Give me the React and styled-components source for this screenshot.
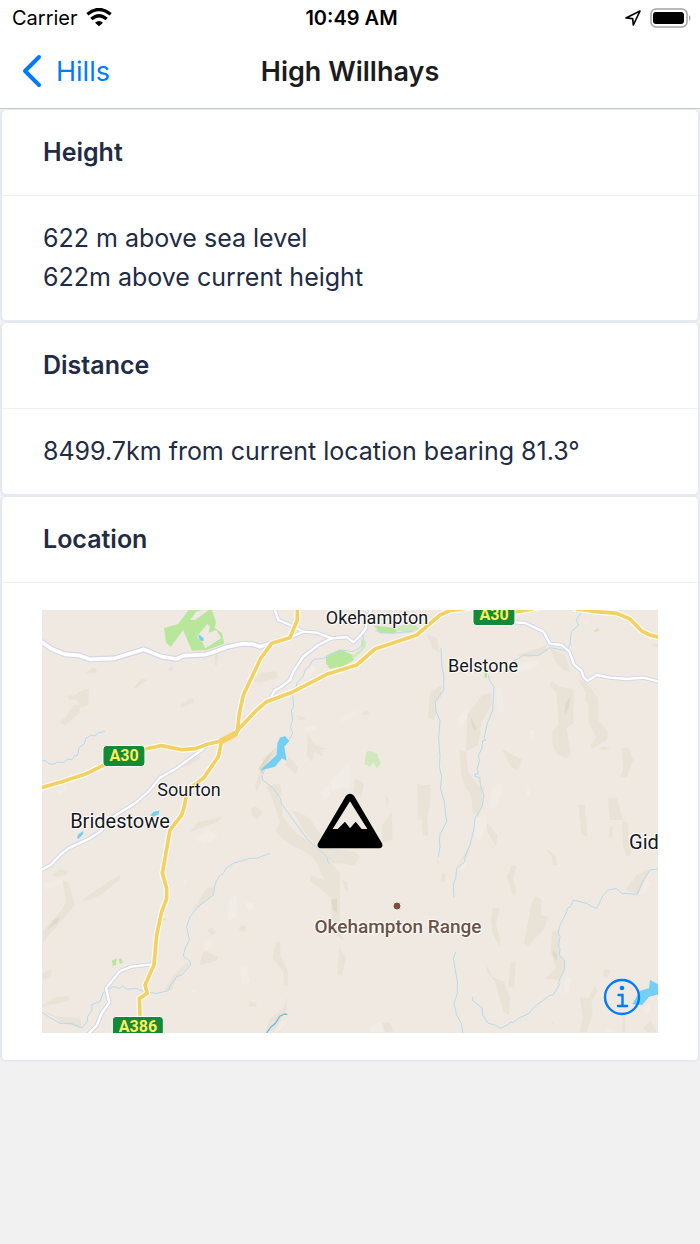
import React from "react";
import styled, { createGlobalStyle } from "styled-components";

const roads = {
  minor: [
    "M697 -5L709 30L744 45L784 65L824 68L869 85L914 81L934 97L952 80L972 55L974 25L990 -5",
    "M744 83L784 65",
    "M869 85L829 105L784 140L754 185L744 210L719 230L699 240L689 258",
    "M484 417L444 445L404 475L354 503L319 545L279 580L214 620L174 665L144 685L79 715L54 735L26 765L0 778",
    "M330 1063L269 1070L234 1083L192 1135L202 1177L179 1210L164 1247L139 1272",
    "M1419 37L1449 39L1504 65L1524 101L1559 105L1582 125L1596 163L1619 183L1624 200L1636 213L1664 195L1704 203L1754 207L1804 203L1852 215",
  ],
  wide: "M0 97L29 117L69 133L109 136L144 148L219 145L306 118L359 140L404 147L424 137L489 134L524 123L554 111L604 101L634 103L654 110L689 100",
  major: [
    "M-5 534L54 517L129 493L182 467L250 436L309 417L359 407L419 419L461 416L494 403L539 393L579 372L594 353L644 300L674 275L754 245L854 193L944 165L999 117L1124 75L1194 15L1224 2L1290 -8",
    "M1400 8L1440 3L1500 -10",
    "M1600 -4L1664 5L1724 10L1764 27L1799 63L1824 75L1852 82",
    "M766 -5L766 30L744 83L689 100L656 145L604 255L592 310L586 365",
    "M539 393L529 440L484 505L449 530L431 565L427 590L419 615L384 660L361 790L374 835L374 865L359 905L344 975L336 1065L309 1125L316 1150L292 1165L294 1215",
  ],
};

const rivers = [
  "M0 453L12 452L20 461L34 463L46 456L64 458L78 447L90 449L98 436L105 438L112 412L126 402L132 384L148 376L160 378L165 370L189 364",
  "M966 75L960 105L949 117L930 125L904 120L880 128L844 145L815 148L800 170L790 178L784 198L764 220L762 240L752 255L755 290L748 300L752 330L745 350L752 370L740 392",
  "M660 495L662 510L694 535L715 565L719 582L794 685L854 740L858 755L864 762",
  "M1197 115L1200 170L1206 200L1205 240L1180 275L1182 305L1194 333L1190 385L1194 440L1192 470L1199 500L1195 535L1206 570L1212 620L1214 635L1194 675L1192 690L1194 710L1189 740",
  "M1339 195L1342 210L1356 230L1352 300L1336 340L1326 385L1332 390L1322 392L1320 415L1310 435L1312 455L1306 475L1309 492L1298 492L1300 500L1313 502L1316 530L1326 555L1320 590L1299 625L1296 655L1284 705L1270 735L1268 755L1244 775L1242 800L1234 825L1236 862",
  "M1618 7L1602 30L1610 45L1588 65L1584 105L1570 122L1545 117L1524 113L1489 137L1445 135L1430 145L1404 158",
  "M1242 1025L1234 1045L1246 1115L1246 1150L1236 1180L1244 1215L1258 1240L1262 1269",
  "M1291 1160L1293 1173L1320 1193L1322 1215L1339 1240L1360 1245L1374 1255L1400 1243L1404 1237L1414 1238L1430 1224L1459 1212L1480 1188L1524 1156L1532 1156L1552 1125L1549 1117L1567 1080L1568 1050L1552 1035L1554 1015L1549 1010L1554 980L1549 970L1552 950L1574 905L1576 895L1586 890L1594 870L1634 880L1650 890L1664 895L1672 880L1682 858L1699 840L1724 835L1739 850L1786 853L1800 818L1824 780L1849 777",
  "M0 1207L24 1223L54 1240L90 1241L119 1254L137 1232L136 1221L150 1200L149 1184L174 1175L184 1147L214 1130L234 1135L241 1127L254 1138L284 1135L304 1145L344 1150L380 1142L384 1128L404 1100L420 1095L446 1065L444 1053L424 1038L429 1015L442 990L434 950L444 920L474 885L514 855L520 820L532 798L544 790L552 775L574 760L624 745L644 745L684 730",
];

// Each patch of relief is grouped by map sheet, with the sheet's own origin.
const sheets = [
  {
    at: "-6 -15",
    dark: "M135 205L160 186L172 194L165 205ZM82 270L102 272L132 253L147 252L145 300L125 308L108 283L88 284ZM57 350L75 338L102 300L122 300L118 325L75 363ZM280 250L302 222L324 224L300 238L288 251ZM387 195L393 183L400 185L396 198ZM420 300L452 280L464 283L460 293L424 308ZM526 145L536 150L530 183L523 178ZM415 490L450 462L482 450L478 463L440 483Z",
    light: "M48 555L80 540L80 556L52 570Z",
  },
  {
    at: "594 -15",
    dark: "M38 230L62 204L108 198L115 218L60 232ZM200 450L203 388L225 420L265 432L240 435L250 455L222 438L215 470ZM366 330L378 315L390 328ZM560 88L590 98L598 145L578 130ZM563 340L570 262L605 240L604 275L583 300L590 325L580 345ZM70 460L110 425L112 455L65 490L68 520L50 560L45 545ZM532 535L572 548L570 600L560 640L533 645ZM345 520L372 535L364 575L338 568ZM135 480L148 455L174 487L168 508ZM170 330L202 340L180 348ZM75 545L120 535L125 570L100 575Z",
    light: "M185 210L218 182L228 190L205 220ZM300 340L345 315L352 328L305 352ZM360 160L408 136L400 160L370 170ZM270 530L325 475L332 510L325 550L302 545L275 560ZM240 560L268 540L270 570L250 585ZM190 370L225 362L232 375L195 380Z",
  },
  {
    at: "1224 -15",
    dark: "M298 240L305 228L330 245L371 252L370 355L350 370L362 448L350 460L320 448L307 420V380L325 360L320 265ZM380 218L412 236L444 280L445 345L474 380L470 405L425 432L422 420L438 395L415 350V300L405 285L408 265ZM48 440L52 330L95 272L124 262L125 300L95 350L85 420ZM28 435L48 440L55 500L95 560L100 600L85 635L68 625L65 580L35 520ZM155 433L215 462L205 495L185 488ZM515 430L535 427L550 465L540 490L530 518L510 515L520 490ZM300 130L345 150L360 202L335 192L315 165ZM200 150L270 128L290 120L290 140L240 158ZM474 580L500 578L520 645H480ZM385 598L405 602V645H390ZM443 432L460 425L482 430L470 436ZM602 118L625 118V126L605 124Z",
    light: "M192 190L225 172L270 166L262 182L200 208ZM138 245L155 250L162 318L142 325ZM20 345L48 308L52 335L30 370ZM125 555L152 530L155 560L135 615L120 605ZM240 375H252L250 405L238 402ZM230 545L240 542V570L230 575ZM405 50L418 42L408 62Z",
  },
  {
    at: "-6 615",
    dark: "M67 196L84 200L105 270L8 382V350L65 285L78 260ZM128 252L160 230L205 200L240 180L242 190L180 242L135 257ZM36 178L65 163L88 168L78 180L45 187ZM8 567L50 545L88 543L85 558L8 575ZM8 585L50 605L120 608L125 640L70 626ZM450 48L475 20L545 5L535 20L460 48ZM370 530L395 490L440 442L448 450L410 490L395 525ZM478 450L492 405L535 425L530 437ZM455 290L500 220L522 215L520 240L490 265ZM502 345L515 336L527 352L515 362ZM595 345L605 330L620 335L615 352ZM8 475L38 460L30 485L8 495Z",
    light: "M15 205L65 192L68 205L20 225ZM568 250L590 240V305L565 315ZM465 72L510 40L535 68L490 88ZM495 380L518 375L515 395L492 410ZM420 190L440 195L438 208ZM450 525L468 528L462 538Z",
  },
  {
    at: "594 525",
    dark: "M85 5L125 50L130 100L175 150L225 180L255 215L300 265V440L312 468L290 452L275 400L272 340L240 310L210 290L212 272L255 285L225 225L195 200L145 175L105 140L120 110ZM155 75L205 95L240 145L270 190L345 200L360 215L345 242L300 235L275 235L250 205L200 150ZM108 470H120L122 515L145 560L143 605L132 600L130 560L97 520ZM298 487L318 518L305 573L292 567ZM532 0L570 0L560 65L565 153L550 150ZM427 120L455 80L458 165L425 175ZM437 30L448 45L440 65ZM590 215L600 240L592 235ZM603 290L608 262L617 268L615 290ZM75 740L90 700L130 670L142 635L140 675L105 735ZM33 70L45 62L68 80L50 105L35 90ZM25 665L28 648L50 655L48 665ZM670 0L732 5L720 65L700 40ZM425 715L450 712L460 742H435ZM650 245L675 205L690 180L685 210ZM308 285L320 290L327 325L312 310Z",
    light: "M0 540L22 545L30 590L5 600ZM385 730L420 708L430 742H395ZM105 735L132 705L142 715L120 735ZM15 352L38 355L40 370L22 375Z",
  },
  {
    at: "1224 615",
    dark: "M110 20L142 60L138 95L112 50ZM170 185L185 150L200 153L190 190L200 235L188 238ZM222 385L245 260L258 242L275 255L272 300L298 305L290 320L280 345L235 392ZM128 280L150 278L138 330L152 375L148 395L128 355L123 315ZM112 450L125 485L162 500L180 545L177 600L160 590L135 500L110 470ZM182 440L196 443L193 518L175 515ZM306 352L325 345L330 420L342 440L340 470L325 495L285 492L318 460L302 410ZM388 0H408L412 65L395 60ZM517 15L535 25V70L543 120L530 125L518 90ZM287 98L318 125L322 150L308 150L305 125ZM525 225L560 180L600 160L565 238ZM390 545L415 550L435 510L442 530L425 560L428 600L410 652H388L398 610ZM458 480L465 460L482 465L470 490ZM517 605H525L527 652H517ZM480 35L488 38L485 70L477 65ZM305 618L312 622L308 630ZM580 640L600 615L622 652H590Z",
    light: "M75 10L105 0L110 25L90 75L72 60ZM342 540L345 485L362 490L355 530ZM567 240L590 190L600 205L585 235ZM35 160L45 125L50 145L42 165ZM460 652L475 640L500 652ZM578 580L600 570V595L585 597Z",
  },
];

const Terrain = () => (
  <TerrainSvg viewBox="0 0 1848 1269" preserveAspectRatio="xMidYMid slice" aria-hidden="true">
    <rect width="1848" height="1269" fill="#efe9e1" />
    {sheets.map((s) => (
      <g key={s.at} transform={`translate(${s.at})`}>
        <path d={s.dark} fill="#e9e3d7" />
        <path d={s.light} fill="#f1ede6" />
      </g>
    ))}
    <path
      d="M650 475L674 440L700 415L690 430L670 470L665 495ZM1286 320L1302 350L1300 363L1290 350ZM1570 280L1586 260L1578 300L1569 313ZM15 960L35 930L55 920L45 940L18 958ZM868 870L885 865L886 910L872 900ZM1534 1020L1545 1035L1544 1055L1532 1035Z"
      fill="#dfd9cb"
    />
    <g fill="#b8e79c">
      <path d="M366 54L408 43L440 0H510L522 36L518 54L540 70L547 101L494 120L450 122L423 60L387 110L372 98Z" />
      <path d="M852 137L894 118L932 135L936 150L904 169L864 176L852 160Z" />
      <path d="M996 47L1030 50L1064 55V68L1015 70Z" />
      <path d="M210 1052L224 1045L222 1064L212 1069ZM230 1048L238 1045L242 1058L234 1063ZM366 923L370 928L364 932Z" />
      <path d="M1327 191L1335 185V202L1329 204Z" />
    </g>
    <g fill="#d0e9bc">
      <path d="M930 138L958 117L958 90L973 92L970 110L955 128L932 147Z" />
      <path d="M1068 48L1115 40L1135 58L1100 68L1066 62Z" />
      <path d="M973 425L984 422L1004 430L1016 462L1004 474L993 455L985 470L967 462Z" />
      <path d="M1655 60L1670 54L1672 63L1658 67Z" />
    </g>
    <path
      d="M445 30L462 5L480 0H500L480 15L460 30ZM464 80L496 42L504 50L500 68L522 60L538 84L490 115L480 95Z"
      fill="#efe9e1"
    />
    <path d="M468 78L473 75L485 85L484 94L474 91Z" fill="#73cff3" />
    <g fill="none" stroke="#b5dbee" strokeWidth="3" strokeLinejoin="round">
      {rivers.map((d) => (
        <path key={d} d={d} />
      ))}
      <path d="M674 1269L686 1252L700 1240L714 1218L728 1212L736 1214" stroke="#6cbbe3" strokeWidth="4" />
      <path d="M1000 60L1015 68L1050 70L1110 64" />
    </g>
    <g fill="#73cff3">
      <path d="M714 383L729 378L742 393L727 410L734 452L720 445L699 470L660 480L659 493L658 478L704 435L706 400Z" />
      <path d="M1771 1182L1794 1142L1821 1135L1824 1110L1849 1123V1153L1821 1160L1801 1185Z" />
      <path d="M105 680L110 672L124 663L123 673L108 688ZM325 616L335 605L352 602L350 612L335 620Z" />
    </g>
    <g fill="none" strokeLinejoin="round" strokeLinecap="round">
      {roads.minor.map((d) => (
        <path key={d} d={d} stroke="#d3d6e8" strokeWidth="13" />
      ))}
      <path d={roads.wide} stroke="#d3d6e8" strokeWidth="18" />
      {roads.minor.map((d) => (
        <path key={d} d={d} stroke="#ffffff" strokeWidth="7" />
      ))}
      <path d={roads.wide} stroke="#ffffff" strokeWidth="11" />
      {roads.major.map((d) => (
        <path key={d} d={d} stroke="#fffdf5" strokeWidth="18" />
      ))}
      {roads.major.map((d) => (
        <path key={d} d={d} stroke="#f3d063" strokeWidth="11" />
      ))}
      <path d="M539 393L579 372" stroke="#f3d063" strokeWidth="18" />
    </g>
  </TerrainSvg>
);

const WifiIcon = () => (
  <svg width="26" height="19" viewBox="0 0 78 57" aria-hidden="true">
    <g fill="none" stroke="#000" strokeWidth="10">
      <path d="M4 19Q39 -10 74 19" />
      <path d="M16 33Q39 13 62 33" />
    </g>
    <path d="M27 44Q39 34 51 44L39 55Z" />
  </svg>
);

const ArrowIcon = () => (
  <svg width="16" height="16" viewBox="0 0 48 48" aria-hidden="true">
    <path d="M3 24L45 3L25 45L23 26Z" fill="none" stroke="#000" strokeWidth="5" strokeLinejoin="round" />
  </svg>
);

const BatteryIcon = () => (
  <svg width="41" height="20" viewBox="0 0 41 20" aria-hidden="true">
    <rect x="1" y="1" width="36" height="18" rx="5" fill="none" stroke="#a3a3a3" strokeWidth="1.500" />
    <rect x="3" y="4" width="31" height="12" rx="3" />
    <path d="M39 7Q42 10 39 13Z" fill="#a3a3a3" />
  </svg>
);

const ChevronIcon = () => (
  <svg width="20" height="34" viewBox="0 0 20 34" aria-hidden="true">
    <path d="M17 3L3 17L17 31" fill="none" stroke="#007aff" strokeWidth="4" strokeLinecap="round" strokeLinejoin="round" />
  </svg>
);

const PeakIcon = () => (
  <svg width="66" height="56" viewBox="0 0 198 168" role="img" aria-label="Summit">
    <path
      fillRule="evenodd"
      d="M87 8Q99 -4 111 8L194 149Q199 158 194 163Q192 166 187 166H11Q6 166 4 163Q-1 158 4 149ZM99 25L47 108H62L84 86L99 106L116 86L134 108H151Z"
    />
  </svg>
);

const InfoIcon = () => (
  <svg width="38" height="38" viewBox="0 0 38 38" aria-hidden="true">
    <g fill="none" stroke="#007aff" strokeWidth="2.400">
      <circle cx="19" cy="19" r="17" />
      <path d="M15.500 17H19.500V28M15 28H24" strokeLinecap="round" />
    </g>
    <circle cx="19" cy="10" r="2.300" fill="#007aff" />
  </svg>
);

const HillCard = ({ title, children }) => (
  <Card>
    <CardTitle>{title}</CardTitle>
    <CardBody>{children}</CardBody>
  </Card>
);

const App = () => {
  return (
    <Screen>
      <GlobalStyle />
      <StatusBar>
        <Carrier>
          Carrier
          <WifiIcon />
        </Carrier>
        <Clock>10:49 AM</Clock>
        <Indicators>
          <ArrowIcon />
          <BatteryIcon />
        </Indicators>
      </StatusBar>
      <NavBar>
        <BackLink href="#hills">
          <ChevronIcon />
          Hills
        </BackLink>
        <NavTitle>High Willhays</NavTitle>
      </NavBar>
      <main>
        <HillCard title="Height">
          <p>622 m above sea level</p>
          <p>622m above current height</p>
        </HillCard>
        <HillCard title="Distance">
          <p>8499.7km from current location bearing 81.3°</p>
        </HillCard>
        <HillCard title="Location">
          <Map>
            <Terrain />
            <Place $x={335} $y={8}>Okehampton</Place>
            <Place $x={441} $y={56}>Belstone</Place>
            <Place $x={147} $y={180}>Sourton</Place>
            <Place $x={78} $y={211} $size={20}>Bridestowe</Place>
            <Place $x={602} $y={232} $size={20}>Gid</Place>
            <Place $x={356} $y={317} $size={19} $brown>Okehampton Range</Place>
            <Dot $x={355} $y={296} />
            <Shield $x={82} $y={146}>A30</Shield>
            <Shield $x={452} $y={5}>A30</Shield>
            <Shield $x={96} $y={417}>A386</Shield>
            <Marker $x={308} $y={211}>
              <PeakIcon />
            </Marker>
            <InfoButton type="button" aria-label="Map information">
              <InfoIcon />
            </InfoButton>
          </Map>
        </HillCard>
      </main>
    </Screen>
  );
};

const GlobalStyle = createGlobalStyle`
  * {
    box-sizing: border-box;
  }
  body {
    margin: 0;
    background: #f1f1f1;
    font-family: Inter, "Liberation Sans", sans-serif;
  }
  p, h1, h2 {
    margin: 0;
  }
`;
const Screen = styled.div`
  min-height: 100vh;
  background: #f1f1f1;
`;
const StatusBar = styled.div`
  display: grid;
  grid-template-columns: 1fr auto 1fr;
  align-items: center;
  height: 35px;
  padding: 0 9px 0 12px;
  background: white;
  color: black;
  font-size: 20px;
`;
const Carrier = styled.div`
  display: flex;
  align-items: center;
  gap: 8px;
`;
const Clock = styled.div`
  font-weight: 600;
`;
const Indicators = styled.div`
  display: flex;
  align-items: center;
  justify-content: flex-end;
  gap: 9px;
`;
const NavBar = styled.header`
  display: grid;
  grid-template-columns: 1fr auto 1fr;
  align-items: center;
  height: 74px;
  padding: 0 22px 1px;
  background: white;
  border-bottom: 1px solid #c6c6cb;
`;
const BackLink = styled.a`
  display: flex;
  align-items: center;
  gap: 14px;
  color: #007aff;
  font-size: 27px;
  text-decoration: none;
`;
const NavTitle = styled.h1`
  color: #1c1c1e;
  font-size: 27px;
  font-weight: 600;
`;
const Card = styled.section`
  background: white;
  border: 2px solid #e4e9f2;
  border-top-width: 1px;
  border-radius: 6px;
`;
const CardTitle = styled.h2`
  padding: 23px 41px;
  border-bottom: 1px solid #edf1f7;
  color: #222b45;
  font-size: 25px;
  font-weight: 600;
  line-height: 39px;
`;
const CardBody = styled.div`
  padding: 23px 40px;
  color: #222b45;
  font-size: 25px;
  line-height: 39px;
  p {
    padding: 0 1px;
  }
`;
const Map = styled.div`
  position: relative;
  margin: 4px 0;
  aspect-ratio: 616 / 423;
  overflow: hidden;
`;
const TerrainSvg = styled.svg`
  display: block;
  width: 100%;
  height: 100%;
`;
const Pin = styled.span`
  position: absolute;
  left: ${(props) => props.$x / 6.16}%;
  top: ${(props) => props.$y / 4.23}%;
  transform: translate(-50%, -50%);
`;
const Place = styled(Pin)`
  color: ${(props) => (props.$brown ? "#6b5344" : "#16181d")};
  font-family: Roboto, "Liberation Sans", sans-serif;
  font-size: ${(props) => props.$size || 18}px;
  font-weight: ${(props) => (props.$brown ? 500 : 400)};
  line-height: 16px;
  white-space: nowrap;
  text-shadow: 0 0 2px white, 0 0 2px white, 1px 1px 1px white, -1px -1px 1px white;
`;
const Dot = styled(Pin)`
  width: 9px;
  height: 9px;
  border: 1px solid #f3eee8;
  border-radius: 50%;
  background: #7b503a;
`;
const Shield = styled(Pin)`
  padding: 0 6px;
  border: 1px solid white;
  border-radius: 4px;
  background: #128a38;
  color: #ffee5c;
  font-family: Roboto, "Liberation Sans", sans-serif;
  font-size: 16px;
  font-weight: 700;
  line-height: 20px;
`;
const Marker = styled(Pin)`
  display: flex;
`;
const InfoButton = styled.button`
  position: absolute;
  right: 17px;
  bottom: 17px;
  display: flex;
  padding: 0;
  border: 0;
  background: none;
  cursor: pointer;
`;

export default App;
